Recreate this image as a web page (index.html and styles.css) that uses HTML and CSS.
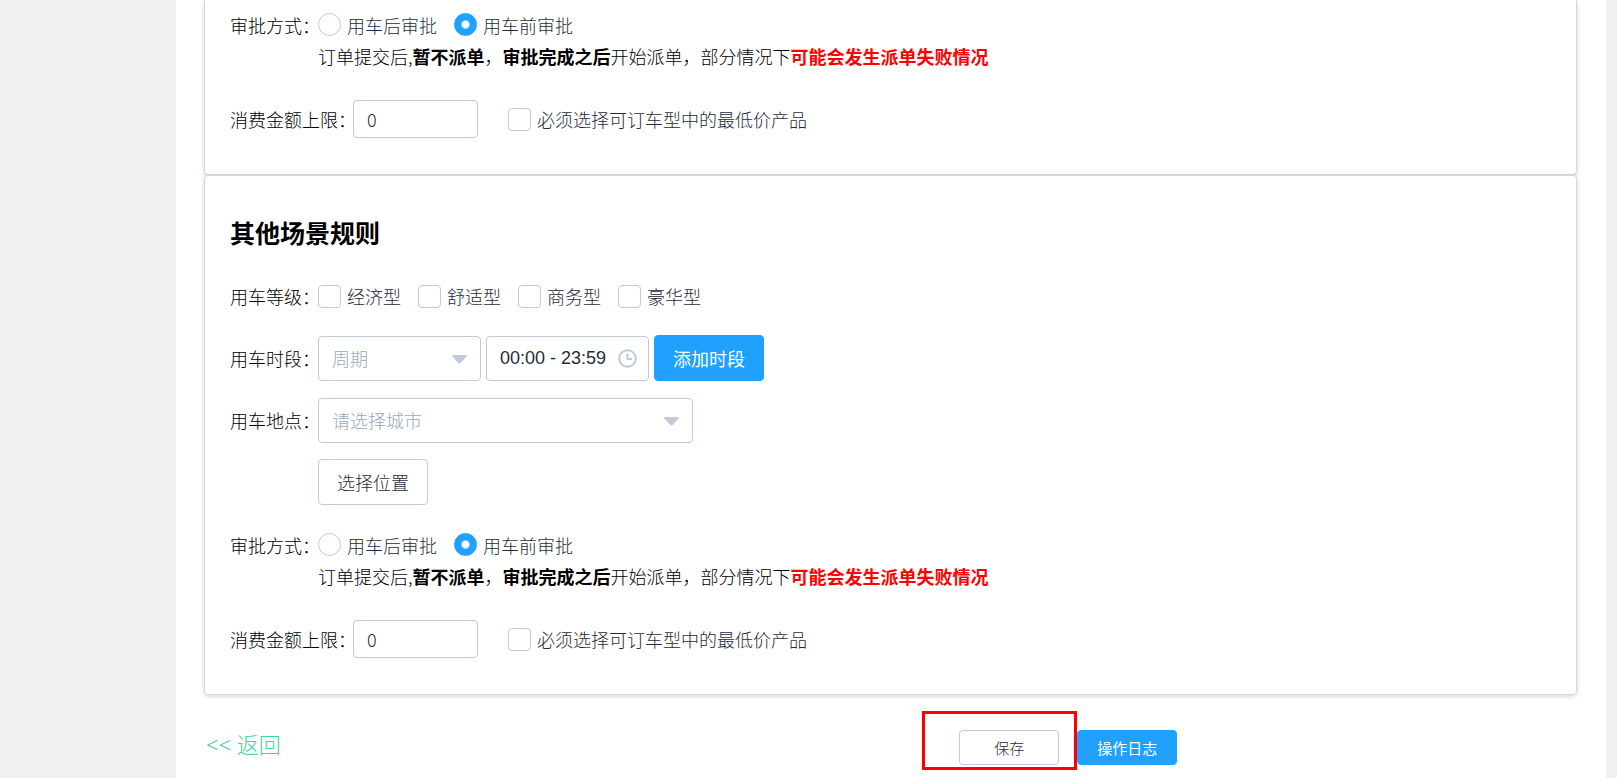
FILE: index.html
```html
<!DOCTYPE html>
<html lang="zh-CN">
<head>
  <meta charset="UTF-8">
  <meta name="viewport" content="width=device-width, initial-scale=1.0">
  <title>用车规则</title>
  <link rel="stylesheet" href="styles.css">
</head>
<body>

<aside class="sidebar"></aside>

<main class="content">
  <section class="card card-continued">
    <div class="row row-approval">
      <span class="label">审批方式：</span>
      <div class="approval">
        <div class="options">
          <label class="option"><input type="radio" name="approval1" value="after">用车后审批</label>
          <label class="option"><input type="radio" name="approval1" value="before" checked>用车前审批</label>
        </div>
        <p class="hint">订单提交后,<b>暂不派单</b>，<b>审批完成之后</b>开始派单，部分情况下<b class="warn">可能会发生派单失败情况</b></p>
      </div>
    </div>
    <div class="row row-limit">
      <label class="label label-long" for="limit1">消费金额上限：</label>
      <input class="field limit" id="limit1" type="text" value="0">
      <label class="option"><input type="checkbox">必须选择可订车型中的最低价产品</label>
    </div>
  </section>

  <section class="card">
    <h2>其他场景规则</h2>

    <div class="row">
      <span class="label">用车等级：</span>
      <div class="options">
        <label class="option"><input type="checkbox">经济型</label>
        <label class="option"><input type="checkbox">舒适型</label>
        <label class="option"><input type="checkbox">商务型</label>
        <label class="option"><input type="checkbox">豪华型</label>
      </div>
    </div>

    <div class="row">
      <label class="label" for="period">用车时段：</label>
      <div class="controls">
        <div class="field-wrap">
          <select class="field" id="period">
            <option value="">周期</option>
          </select>
          <svg class="caret" width="15" height="9" viewBox="0 0 15 9"><path d="M1 0h13q1.3.3.6 1.4L8.6 8Q7.5 9 6.4 8L.4 1.4Q-.3.3 1 0z"/></svg>
        </div>
        <div class="field-wrap">
          <input class="field time" type="text" value="00:00 - 23:59" aria-label="时间范围">
          <svg class="clock" width="19" height="19" viewBox="0 0 19 19"><circle cx="9.500" cy="9.500" r="8.300"/><path d="M9.500 4.500v5.500h4.500"/></svg>
        </div>
        <button class="btn btn-primary" type="button">添加时段</button>
      </div>
    </div>

    <div class="row">
      <label class="label" for="city">用车地点：</label>
      <div class="field-wrap field-wide">
        <select class="field" id="city">
          <option value="">请选择城市</option>
        </select>
        <svg class="caret" width="15" height="9" viewBox="0 0 15 9"><path d="M1 0h13q1.3.3.6 1.4L8.6 8Q7.5 9 6.4 8L.4 1.4Q-.3.3 1 0z"/></svg>
      </div>
    </div>

    <div class="row">
      <span class="label"></span>
      <button class="btn" type="button">选择位置</button>
    </div>

    <div class="row row-approval">
      <span class="label">审批方式：</span>
      <div class="approval">
        <div class="options">
          <label class="option"><input type="radio" name="approval2" value="after">用车后审批</label>
          <label class="option"><input type="radio" name="approval2" value="before" checked>用车前审批</label>
        </div>
        <p class="hint">订单提交后,<b>暂不派单</b>，<b>审批完成之后</b>开始派单，部分情况下<b class="warn">可能会发生派单失败情况</b></p>
      </div>
    </div>
    <div class="row row-limit">
      <label class="label label-long" for="limit2">消费金额上限：</label>
      <input class="field limit" id="limit2" type="text" value="0">
      <label class="option"><input type="checkbox">必须选择可订车型中的最低价产品</label>
    </div>
  </section>

  <footer class="footer">
    <a class="back" href="#">&lt;&lt; 返回</a>
    <div class="save">
      <button class="btn btn-small" type="button">保存</button>
      <span class="save-mark"></span>
    </div>
    <button class="btn btn-small btn-primary" type="button">操作日志</button>
  </footer>
</main>

</body>
</html>
```

FILE: styles.css
```css
* {
  box-sizing: border-box;
}

body {
  margin: 0;
  display: flex;
  min-height: 100vh;
  background-color: #f1f1f1;
  color: #000;
  font-family: "Noto Sans CJK SC", sans-serif;
  font-size: 18px;
  font-weight: 300;
  line-height: 24px;
}

input, select, button {
  font: inherit;
  color: #1f2d3d;
  margin: 0;
}

b {
  font-weight: 700;
}

.sidebar {
  flex: 0 0 176px;
}

.content {
  flex: 1;
  min-width: 0;
  margin-right: 11px;
  padding: 0 29px 0 28px;
  background-color: #fff;
}

.card {
  padding: 38px 26px 36px 25px;
  border: 1px solid #d1dbe5;
  border-radius: 4px;
  background-color: #fff;
  box-shadow: 0 2px 4px rgba(0, 0, 0, 0.12), 0 0 6px rgba(0, 0, 0, 0.04);
}

.card-continued {
  padding-top: 1px;
  border-top: none;
  border-top-left-radius: 0;
  border-top-right-radius: 0;
}

h2 {
  margin: 0 0 23px;
  font-size: 25px;
  line-height: 36px;
}

.row {
  display: flex;
  align-items: center;
  min-height: 46px;
  margin-bottom: 16px;
}

.label {
  flex: 0 0 88px;
  min-width: 0;
  white-space: nowrap;
}

.label-long {
  flex-basis: 123px;
}

.row-approval {
  align-items: flex-start;
  padding-top: 12px;
  margin-bottom: 32px;
}

.row-limit {
  min-height: 38px;
  margin-bottom: 0;
}

.options {
  display: flex;
  gap: 17px;
}

.option {
  display: flex;
  align-items: center;
  gap: 6px;
  height: 23px;
  color: #1f2d3d;
}

.option input {
  appearance: none;
  width: 23px;
  height: 23px;
  border: 1px solid #bfcbd9;
  border-radius: 4px;
  background-color: #fff;
}

.option input[type="radio"] {
  border-radius: 50%;
}

.option input[type="radio"]:checked {
  border-color: #20a0ff;
  background: radial-gradient(circle, #fff 3px, #20a0ff 5px);
}

.option input[type="checkbox"]:checked {
  border-color: #20a0ff;
  background-color: #20a0ff;
}

.hint {
  margin: 8px 0 0;
}

.warn {
  color: #f00;
}

.controls {
  display: flex;
  align-items: center;
  gap: 5px;
}

.field-wrap {
  position: relative;
  width: 163px;
}

.field-wide {
  width: 375px;
}

.field {
  appearance: none;
  display: block;
  width: 100%;
  height: 45px;
  padding: 0 13px;
  border: 1px solid #bfcbd9;
  border-radius: 4px;
  background-color: #fff;
}

select.field {
  color: #97a8be;
}

.time {
  font-family: "Liberation Sans", Arial, sans-serif;
}

.limit {
  width: 125px;
  height: 38px;
  margin-right: 30px;
}

.caret {
  position: absolute;
  right: 14px;
  top: 19px;
  fill: #bfcbd9;
  pointer-events: none;
}

.clock {
  position: absolute;
  right: 12px;
  top: 13px;
  fill: none;
  stroke: #bfcbd9;
  stroke-width: 2;
  pointer-events: none;
}

.btn {
  min-width: 110px;
  height: 46px;
  padding: 0 18px;
  border: 1px solid #bfcbd9;
  border-radius: 4px;
  background-color: #fff;
  white-space: nowrap;
  cursor: pointer;
}

.btn-primary {
  border-color: #20a0ff;
  background-color: #20a0ff;
  color: #fff;
  font-weight: 400;
}

.btn-small {
  min-width: 100px;
  height: 35px;
  font-size: 15px;
}

.footer {
  display: grid;
  grid-template-columns: 55% 100px auto;
  justify-content: start;
  align-items: start;
  padding: 35px 0 8px;
}

.footer .btn {
  display: block;
}

.footer > .btn {
  margin-left: 18px;
}

.back {
  padding-left: 2px;
  color: #42d3a5;
  font-family: "Noto Sans", "Noto Sans CJK SC", sans-serif;
  font-size: 22px;
  line-height: 28px;
  text-decoration: none;
}

.save {
  position: relative;
}

/* red highlight around the save button */
.save-mark {
  position: absolute;
  top: -19px;
  right: -18px;
  bottom: -5px;
  left: -37px;
  border: 3px solid #f00;
  pointer-events: none;
}
```
